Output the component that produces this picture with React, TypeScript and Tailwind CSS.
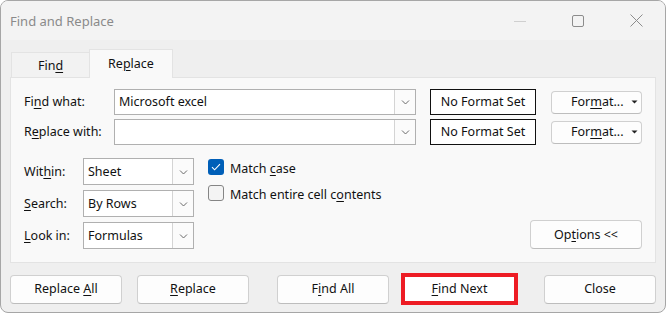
import type { ReactNode } from "react";

const font = { fontFamily: '"Noto Sans", "Open Sans", Arial, sans-serif' };

function Key({ children }: { children: ReactNode }) {
  return <span className="underline underline-offset-[2px] decoration-[1px]">{children}</span>;
}

function Chevron() {
  return (
    <svg width="9" height="6" viewBox="0 0 9 6" fill="none">
      <path d="M1 1.5l3.5 3.5 3.5-3.5" stroke="#6b6b6b" strokeWidth="1" />
    </svg>
  );
}

function Combo({
  value,
  width,
  height,
}: {
  value: string;
  width: string;
  height: string;
}) {
  return (
    <div className={`flex ${width} ${height} border border-[#b0b0b0] bg-white`}>
      <div className="flex flex-1 items-center pl-[4px] text-[#111]">{value}</div>
      <div className="flex w-[21px] items-center justify-center border-l border-[#d4d4d4] bg-[#fbfbfb]">
        <Chevron />
      </div>
    </div>
  );
}

function Btn({
  children,
  className = "",
}: {
  children: ReactNode;
  className?: string;
}) {
  return (
    <div
      className={`flex h-[29px] w-[112px] items-center justify-center rounded-[4px] border border-[#d0d0d0] border-b-[#bdbdbd] bg-[#fdfdfd] text-[#111] ${className}`}
    >
      {children}
    </div>
  );
}

function FormatBtn() {
  return (
    <div className="ml-[15px] flex h-[23px] w-[91px] items-center justify-between rounded-[4px] border border-[#d0d0d0] border-b-[#bdbdbd] bg-[#fdfdfd] pl-[19px] pr-[3px] text-[#111]">
      <span>
        For<Key>m</Key>at...
      </span>
      <svg width="7" height="4" viewBox="0 0 7 4">
        <path d="M0.5 0.5h6L3.5 3.5z" fill="#222" />
      </svg>
    </div>
  );
}

export default function App() {
  return (
    <div className="h-[315px] w-[667px] bg-white text-[12.5px] leading-[16px]" style={font}>
      <div className="flex h-[313px] w-[666px] flex-col overflow-hidden rounded-[8px] border border-[#a6a6a6] bg-[#efefef]">
        {/* title bar */}
        <div className="flex h-[39px] items-center bg-[#f3f3f3]">
          <div className="pl-[9px] text-[13px] text-[#8a8a8a]">Find and Replace</div>
          <div className="ml-auto flex h-full">
            <div className="flex w-[58px] items-center justify-center">
              <div className="mt-[2px] h-px w-[12px] bg-[#cfcfcf]" />
            </div>
            <div className="flex w-[58px] items-center justify-center">
              <div className="h-[12px] w-[12px] rounded-[2px] border border-[#8c8c8c]" />
            </div>
            <div className="flex w-[58px] items-center justify-center">
              <svg width="13" height="13" viewBox="0 0 13 13" fill="none">
                <path d="M0.5 0.5l12 12M12.5 0.5l-12 12" stroke="#8c8c8c" strokeWidth="1" />
              </svg>
            </div>
          </div>
        </div>

        {/* body */}
        <div className="flex flex-col pl-[9px] pt-[9px]">
          <div className="relative z-10 ml-[1px] flex items-end">
            <div className="flex h-[25px] w-[78px] items-center justify-center border-l border-t border-[#e3e3e3] bg-[#f2f2f2] pt-[1px] text-[#111]">
              <span>
                Fin<Key>d</Key>
              </span>
            </div>
            <div className="-mb-px flex h-[29px] w-[84px] items-center justify-center border-l border-r border-t border-[#e3e3e3] bg-[#f9f9f9] text-[#111]">
              <span>
                Re<Key>p</Key>lace
              </span>
            </div>
          </div>

          <div className="flex h-[186px] w-[646px] flex-col border border-[#e3e3e3] bg-[#f9f9f9] pl-[13px] pr-[13px] pt-[11px]">
            <div className="flex h-[26px] items-center">
              <div className="w-[90px] text-[#111]">
                Fi<Key>n</Key>d what:
              </div>
              <Combo value="Microsoft excel" width="w-[302px]" height="h-[26px]" />
              <div className="ml-[14px] flex h-[26px] w-[106px] items-center justify-center border border-[#111] bg-white text-[#111]">
                No Format Set
              </div>
              <FormatBtn />
            </div>
            <div className="mt-[4px] flex h-[26px] items-center">
              <div className="w-[90px] text-[#111]">
                R<Key>e</Key>place with:
              </div>
              <Combo value="" width="w-[302px]" height="h-[26px]" />
              <div className="ml-[14px] flex h-[26px] w-[106px] items-center justify-center border border-[#111] bg-white text-[#111]">
                No Format Set
              </div>
              <FormatBtn />
            </div>

            <div className="mt-[13px] flex items-end">
              <div className="flex flex-col gap-[5px]">
                <div className="flex items-center">
                  <div className="w-[59px] text-[#111]">
                    Wit<Key>h</Key>in:
                  </div>
                  <Combo value="Sheet" width="w-[111px]" height="h-[27px]" />
                </div>
                <div className="flex items-center">
                  <div className="w-[59px] text-[#111]">
                    <Key>S</Key>earch:
                  </div>
                  <Combo value="By Rows" width="w-[111px]" height="h-[27px]" />
                </div>
                <div className="flex items-center">
                  <div className="w-[59px] text-[#111]">
                    <Key>L</Key>ook in:
                  </div>
                  <Combo value="Formulas" width="w-[111px]" height="h-[27px]" />
                </div>
              </div>

              <div className="ml-[14px] flex flex-col gap-[10px] self-start pt-[1px]">
                <div className="flex h-[16px] items-center">
                  <div className="flex h-[16px] w-[16px] items-center justify-center rounded-[3px] bg-[#005fb8]">
                    <svg width="10" height="8" viewBox="0 0 10 8" fill="none">
                      <path d="M1 4.2l2.6 2.6L9 1.2" stroke="#fff" strokeWidth="1.1" />
                    </svg>
                  </div>
                  <span className="-mb-[4px] ml-[6px] text-[#111]">
                    Match <Key>c</Key>ase
                  </span>
                </div>
                <div className="flex h-[16px] items-center">
                  <div className="h-[16px] w-[16px] rounded-[3px] border border-[#858585] bg-[#f4f4f4]" />
                  <span className="-mb-[4px] ml-[6px] text-[#111]">
                    Match entire cell c<Key>o</Key>ntents
                  </span>
                </div>
              </div>

              <Btn className="ml-auto">
                <span>
                  Op<Key>t</Key>ions &lt;&lt;
                </span>
              </Btn>
            </div>
          </div>

          <div className="mt-[10px] flex h-[32px] items-center">
            <Btn>
              <span>
                Replace <Key>A</Key>ll
              </span>
            </Btn>
            <Btn className="ml-[15px]">
              <span>
                <Key>R</Key>eplace
              </span>
            </Btn>
            <Btn className="ml-[28px] border-[#005fb8] border-b-[#005fb8]">
              <span>
                F<Key>i</Key>nd All
              </span>
            </Btn>
            <div className="ml-[12px] flex h-[32px] w-[117px] items-center justify-center border-[4px] border-[#ed1c24] bg-white text-[#111]">
              <span>
                <Key>F</Key>ind Next
              </span>
            </div>
            <Btn className="ml-[26px]">Close</Btn>
          </div>
        </div>
      </div>
    </div>
  );
}
